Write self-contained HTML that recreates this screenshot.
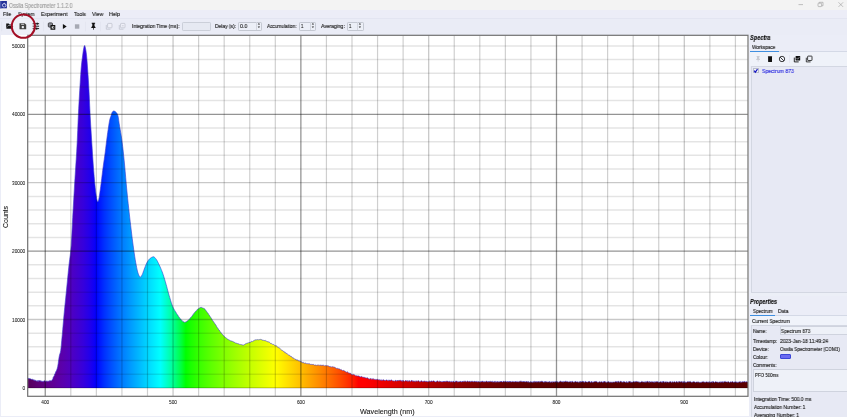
<!DOCTYPE html>
<html lang="en"><head><meta charset="utf-8"><title>Ossila Spectrometer 1.1.2.0</title>
<style>
html,body{margin:0;padding:0;background:#fff;}
body{width:847px;height:417px;overflow:hidden;position:relative;font-family:"Liberation Sans",sans-serif;}
.abs{position:absolute;}
.t{white-space:nowrap;font-family:"Liberation Sans",sans-serif;will-change:transform;-webkit-text-stroke:0.14px currentColor;}
svg{display:block;overflow:visible}
</style></head><body>
<div class="abs" style="left:0px;top:0px;width:847px;height:9.6px;background:#f3f3f3;"></div>
<div class="abs" style="left:0px;top:9.6px;width:847px;height:9.2px;background:#ecedf7;"></div>
<div class="abs" style="left:0px;top:18.8px;width:847px;height:15.8px;background:#eaecf6;"></div>
<div class="abs" style="left:0px;top:17.9px;width:847px;height:0.8px;background:#e3e5f1;"></div>
<div class="abs" style="left:0px;top:34.6px;width:749.3px;height:382.4px;background:#ebedf7;"></div>
<div class="abs" style="left:0.9px;top:34.6px;width:748.4px;height:381.1px;background:#ffffff;"></div>
<div class="abs" style="left:749.3px;top:34.6px;width:97.7px;height:382.4px;background:#ebedf7;"></div>
<svg class="abs" style="left:0;top:1.2px" width="7" height="7.4" viewBox="0 0 7 7.4"><rect x="0" y="0" width="6.9" height="7.3" fill="#222f96"/><rect x="0" y="0" width="1.4" height="7.3" fill="#4b5ab0"/><circle cx="4.2" cy="4.3" r="1.75" fill="none" stroke="#e4e8fb" stroke-width="0.85"/><rect x="3.95" y="1.7" width="0.5" height="1.7" fill="#e4e8fb"/><rect x="3.7" y="5.6" width="1.0" height="0.9" fill="#222f96"/></svg>
<div class="abs t " style="left:9.3px;top:1.64px;font-size:6.3px;line-height:7.56px;color:#9c9c9c;transform:scaleX(0.8132);transform-origin:0 50%;">Ossila Spectrometer 1.1.2.0</div>
<svg class="abs" style="left:790px;top:0" width="57" height="10" viewBox="0 0 57 10"><g stroke="#9a9a9a" stroke-width="0.6" fill="none"><line x1="8.5" y1="4.6" x2="13" y2="4.6"/><rect x="28" y="3.2" width="3.6" height="3.4" rx="0.6"/><path d="M29.2 3.2v-0.9h3.8v3.5h-1.2"/><path d="M48.5 2.3l4.6 4.6M53.1 2.3l-4.6 4.6"/></g></svg>
<div class="abs t " style="left:3.1px;top:11.29px;font-size:5.9px;line-height:7.08px;color:#222;transform:scaleX(0.8520);transform-origin:0 50%;">File</div>
<div class="abs t " style="left:17.6px;top:11.29px;font-size:5.9px;line-height:7.08px;color:#222;transform:scaleX(0.8439);transform-origin:0 50%;">System</div>
<div class="abs t " style="left:40.5px;top:11.29px;font-size:5.9px;line-height:7.08px;color:#222;transform:scaleX(0.8880);transform-origin:0 50%;">Experiment</div>
<div class="abs t " style="left:73.5px;top:11.29px;font-size:5.9px;line-height:7.08px;color:#222;transform:scaleX(0.8640);transform-origin:0 50%;">Tools</div>
<div class="abs t " style="left:91.6px;top:11.29px;font-size:5.9px;line-height:7.08px;color:#222;transform:scaleX(0.8831);transform-origin:0 50%;">View</div>
<div class="abs t " style="left:109px;top:11.29px;font-size:5.9px;line-height:7.08px;color:#222;transform:scaleX(0.9065);transform-origin:0 50%;">Help</div>
<svg class="abs" style="left:0;top:18.8px" width="132" height="15.8" viewBox="0 18.8 132 15.8">
<g fill="#dcdfea"><rect x="1.5" y="21.5" width="0.6" height="9.5"/></g>
<!-- folder -->
<path d="M6.2 23.3h2.5l0.8 0.9h2.9v1.0h-4.4l-1.8 3.2z" fill="#151515"/><path d="M7.7 25.7h5.6l-1.5 2.9h-5.6z" fill="#151515"/>
<!-- save -->
<path d="M19.5 22.95h5.2l1.5 1.5v4.55h-6.7z" fill="#0c0c0c"/><rect x="21.1" y="23.65" width="3.0" height="0.8" fill="#eef0f8"/><rect x="21.75" y="25.9" width="2.1" height="2.1" fill="#eef0f8"/>
<!-- sliders -->
<g stroke="#1b1b1b" stroke-width="1.0" fill="none"><path d="M32.6 23.5h6.5M32.6 26.0h6.5M32.6 28.4h6.5"/></g><g fill="#1b1b1b"><rect x="36.6" y="22.5" width="1.3" height="2.0"/><rect x="34.2" y="25.0" width="1.3" height="2.0"/><rect x="36.0" y="27.4" width="1.3" height="2.0"/></g>
<rect x="43.4" y="21.6" width="0.5" height="9.4" fill="#dee1ec"/>
<!-- copy filled -->
<rect x="48.3" y="22.7" width="4.2" height="4.2" rx="0.9" fill="#8d8f98" stroke="#3a3a3e" stroke-width="0.9"/><rect x="50.5" y="24.9" width="4.8" height="4.6" rx="0.5" fill="#111"/><rect x="51.7" y="26.2" width="2.5" height="2.1" fill="#f4f5fa"/><path d="M52.9 26.5l1.3 0.8l-1.3 0.8z" fill="#111"/>
<!-- play -->
<path d="M62.9 23.9l3.8 2.4l-3.8 2.4z" fill="#111"/>
<!-- stop -->
<rect x="74.9" y="24.1" width="4.4" height="4.4" fill="#a6a9b3"/>
<rect x="85.2" y="21.6" width="0.5" height="9.4" fill="#dee1ec"/>
<!-- pin -->
<path d="M91.7 22.6h3.4v0.9h-0.6v2.4l1.0 1.1v0.7h-4.2v-0.7l1.0-1.1v-2.4h-0.6z" fill="#111"/><rect x="93.05" y="27.6" width="0.7" height="1.9" fill="#111"/>
<rect x="100.3" y="21.6" width="0.5" height="9.4" fill="#dee1ec"/>
<!-- gray copies -->
<g fill="none" stroke="#bcbfca" stroke-width="0.7"><path d="M106.3 24.8v4.2h4.2"/><path d="M119.3 24.8v4.2h4.2"/><rect x="107.6" y="23.2" width="4.4" height="4.4" rx="0.6" fill="#eff0f8"/><rect x="120.6" y="23.2" width="4.4" height="4.4" rx="0.6" fill="#eff0f8"/><path d="M122 25.6h1.8"/></g>
</svg>
<div class="abs t " style="left:132px;top:23.13px;font-size:5.45px;line-height:6.54px;color:#222;transform:scaleX(0.9009);transform-origin:0 50%;">Integration Time (ms):</div>
<div class="abs" style="left:182px;top:21.5px;width:29px;height:9.1px;background:#e6e9f2;border:0.6px solid #cbcfd9;border-radius:1.2px;box-sizing:border-box;"></div>
<div class="abs t " style="left:215px;top:23.13px;font-size:5.45px;line-height:6.54px;color:#222;transform:scaleX(0.9006);transform-origin:0 50%;">Delay (s):</div>
<div class="abs" style="left:238.4px;top:21.5px;width:24px;height:9.1px;background:#eceff7;border:0.6px solid #c4c8d2;border-radius:1.2px;box-sizing:border-box;"></div>
<div class="abs" style="left:256.2px;top:22.1px;width:0.5px;height:7.9px;background:#d3d6df;"></div>
<svg class="abs" style="left:257.2px;top:22.4px" width="4" height="7.4" viewBox="0 0 4 7.4"><path d="M0.7 2.5l1.2-1.5l1.2 1.5zM0.7 4.4l1.2 1.5l1.2-1.5z" fill="#2a2a2a"/></svg>
<div class="abs t " style="left:240.4px;top:23.13px;font-size:5.45px;line-height:6.54px;color:#222;transform:scaleX(0.9635);transform-origin:0 50%;">0.0</div>
<div class="abs t " style="left:267.3px;top:23.13px;font-size:5.45px;line-height:6.54px;color:#222;transform:scaleX(0.8676);transform-origin:0 50%;">Accumulation:</div>
<div class="abs" style="left:299.2px;top:21.5px;width:16.8px;height:9.1px;background:#eceff7;border:0.6px solid #c4c8d2;border-radius:1.2px;box-sizing:border-box;"></div>
<div class="abs" style="left:309.8px;top:22.1px;width:0.5px;height:7.9px;background:#d3d6df;"></div>
<svg class="abs" style="left:310.8px;top:22.4px" width="4" height="7.4" viewBox="0 0 4 7.4"><path d="M0.7 2.5l1.2-1.5l1.2 1.5zM0.7 4.4l1.2 1.5l1.2-1.5z" fill="#2a2a2a"/></svg>
<div class="abs t " style="left:301.2px;top:23.13px;font-size:5.45px;line-height:6.54px;color:#222;transform:scaleX(0.7918);transform-origin:0 50%;">1</div>
<div class="abs t " style="left:321px;top:23.13px;font-size:5.45px;line-height:6.54px;color:#222;transform:scaleX(0.9207);transform-origin:0 50%;">Averaging:</div>
<div class="abs" style="left:347.2px;top:21.5px;width:16.4px;height:9.1px;background:#eceff7;border:0.6px solid #c4c8d2;border-radius:1.2px;box-sizing:border-box;"></div>
<div class="abs" style="left:357.4px;top:22.1px;width:0.5px;height:7.9px;background:#d3d6df;"></div>
<svg class="abs" style="left:358.4px;top:22.4px" width="4" height="7.4" viewBox="0 0 4 7.4"><path d="M0.7 2.5l1.2-1.5l1.2 1.5zM0.7 4.4l1.2 1.5l1.2-1.5z" fill="#2a2a2a"/></svg>
<div class="abs t " style="left:349.2px;top:23.13px;font-size:5.45px;line-height:6.54px;color:#222;transform:scaleX(0.7918);transform-origin:0 50%;">1</div>
<svg class="abs" style="left:0;top:0" width="847" height="417" viewBox="0 0 847 417">
<defs><linearGradient id="spec" gradientUnits="userSpaceOnUse" x1="27.7" y1="0" x2="748.0" y2="0">
<stop offset="0.0000" stop-color="#54005b"/><stop offset="0.0066" stop-color="#590067"/><stop offset="0.0137" stop-color="#5d0073"/><stop offset="0.0208" stop-color="#5f007f"/><stop offset="0.0279" stop-color="#60008b"/><stop offset="0.0350" stop-color="#5f0096"/><stop offset="0.0421" stop-color="#5d00a2"/><stop offset="0.0492" stop-color="#5900ae"/><stop offset="0.0563" stop-color="#5300ba"/><stop offset="0.0599" stop-color="#5000c0"/><stop offset="0.0634" stop-color="#4b00c6"/><stop offset="0.0705" stop-color="#4100d1"/><stop offset="0.0776" stop-color="#3500dd"/><stop offset="0.0847" stop-color="#2500e9"/><stop offset="0.0918" stop-color="#1000f5"/><stop offset="0.0953" stop-color="#0000ff"/><stop offset="0.0989" stop-color="#0013ff"/><stop offset="0.1060" stop-color="#002fff"/><stop offset="0.1131" stop-color="#0046ff"/><stop offset="0.1202" stop-color="#005cff"/><stop offset="0.1273" stop-color="#0071ff"/><stop offset="0.1344" stop-color="#0084ff"/><stop offset="0.1415" stop-color="#0097ff"/><stop offset="0.1486" stop-color="#00a9ff"/><stop offset="0.1557" stop-color="#00bbff"/><stop offset="0.1628" stop-color="#00cdff"/><stop offset="0.1699" stop-color="#00deff"/><stop offset="0.1770" stop-color="#00efff"/><stop offset="0.1841" stop-color="#00ffff"/><stop offset="0.1912" stop-color="#00ffd5"/><stop offset="0.1983" stop-color="#00ffa9"/><stop offset="0.2054" stop-color="#00ff7b"/><stop offset="0.2125" stop-color="#00ff46"/><stop offset="0.2195" stop-color="#00ff00"/><stop offset="0.2266" stop-color="#1aff00"/><stop offset="0.2337" stop-color="#2dff00"/><stop offset="0.2408" stop-color="#3eff00"/><stop offset="0.2479" stop-color="#4eff00"/><stop offset="0.2550" stop-color="#5eff00"/><stop offset="0.2621" stop-color="#6cff00"/><stop offset="0.2692" stop-color="#7bff00"/><stop offset="0.2763" stop-color="#88ff00"/><stop offset="0.2834" stop-color="#96ff00"/><stop offset="0.2905" stop-color="#a3ff00"/><stop offset="0.2976" stop-color="#b0ff00"/><stop offset="0.3047" stop-color="#bdff00"/><stop offset="0.3118" stop-color="#c9ff00"/><stop offset="0.3189" stop-color="#d5ff00"/><stop offset="0.3260" stop-color="#e1ff00"/><stop offset="0.3331" stop-color="#edff00"/><stop offset="0.3402" stop-color="#f9ff00"/><stop offset="0.3438" stop-color="#ffff00"/><stop offset="0.3473" stop-color="#fff900"/><stop offset="0.3544" stop-color="#ffec00"/><stop offset="0.3615" stop-color="#ffdf00"/><stop offset="0.3686" stop-color="#ffd200"/><stop offset="0.3757" stop-color="#ffc500"/><stop offset="0.3828" stop-color="#ffb700"/><stop offset="0.3899" stop-color="#ffa900"/><stop offset="0.3970" stop-color="#ff9b00"/><stop offset="0.4041" stop-color="#ff8d00"/><stop offset="0.4112" stop-color="#ff7e00"/><stop offset="0.4183" stop-color="#ff6f00"/><stop offset="0.4254" stop-color="#ff5f00"/><stop offset="0.4325" stop-color="#ff4f00"/><stop offset="0.4396" stop-color="#ff3e00"/><stop offset="0.4467" stop-color="#ff2b00"/><stop offset="0.4538" stop-color="#ff1600"/><stop offset="0.4591" stop-color="#ff0000"/><stop offset="0.4609" stop-color="#ff0000"/><stop offset="0.4680" stop-color="#ff0000"/><stop offset="0.4946" stop-color="#ec0000"/><stop offset="0.5247" stop-color="#d20000"/><stop offset="0.5567" stop-color="#b40000"/><stop offset="0.5939" stop-color="#940000"/><stop offset="0.6312" stop-color="#7a0000"/><stop offset="0.6631" stop-color="#6a0000"/><stop offset="0.7004" stop-color="#5e0000"/><stop offset="0.7341" stop-color="#5a0000"/><stop offset="1.0000" stop-color="#5a0000"/>
</linearGradient></defs>
<style>
.gD{stroke:#000;stroke-width:1.3;stroke-opacity:.42}
.gMed{stroke:#000;stroke-width:1.3;stroke-opacity:.215}
.gmh{stroke:#000;stroke-width:1.5;stroke-opacity:.105}
.gm{stroke:#000;stroke-width:1.2;stroke-opacity:.19}
.tk{font-family:"Liberation Sans",sans-serif;font-size:5.4px;fill:#222;stroke:#222;stroke-width:0.08}
.ax{font-family:"Liberation Sans",sans-serif;font-size:7.6px;fill:#1a1a1a;stroke:#1a1a1a;stroke-width:0.1}
</style>
<path d="M27.70 378.18 L28.20 378.09 L28.70 378.95 L29.20 378.29 L29.70 379.08 L30.20 378.99 L30.70 378.70 L31.20 379.47 L31.70 378.95 L32.20 379.64 L32.70 379.26 L33.20 379.42 L33.70 380.02 L34.20 380.70 L34.70 379.82 L35.20 380.05 L35.70 380.70 L36.20 381.24 L36.70 380.80 L37.20 380.62 L37.70 381.51 L38.20 380.27 L38.70 381.47 L39.20 380.73 L39.70 380.58 L40.20 380.58 L40.70 380.89 L41.20 381.64 L41.70 380.80 L42.20 381.40 L42.70 381.51 L43.20 381.17 L43.70 381.44 L44.20 380.78 L44.70 380.78 L45.20 380.99 L45.70 381.64 L46.20 381.25 L46.70 381.05 L47.20 381.38 L47.70 381.13 L48.20 380.84 L48.70 381.46 L49.20 381.25 L49.70 380.51 L50.20 380.86 L50.70 380.64 L51.20 380.94 L51.70 380.49 L52.20 379.53 L52.70 379.67 L53.20 377.32 L53.70 376.59 L54.20 376.03 L54.70 374.12 L55.20 373.48 L55.70 371.69 L56.20 371.20 L56.70 369.98 L57.20 368.54 L57.70 366.62 L58.20 363.50 L58.70 359.81 L59.20 356.46 L59.70 354.33 L60.20 353.05 L60.70 350.87 L61.20 346.40 L61.70 340.78 L62.20 335.38 L62.70 329.79 L63.20 323.99 L63.70 318.27 L64.20 312.90 L64.70 307.78 L65.20 302.80 L65.70 297.89 L66.20 292.98 L66.70 287.99 L67.20 282.88 L67.70 277.75 L68.20 272.69 L68.70 267.81 L69.20 263.25 L69.70 259.34 L70.20 255.55 L70.70 251.19 L71.20 245.44 L71.70 237.23 L72.20 227.49 L72.70 217.54 L73.20 208.51 L73.70 199.89 L74.20 191.39 L74.70 182.99 L75.20 174.75 L75.70 167.01 L76.20 159.36 L76.70 151.23 L77.20 142.01 L77.70 130.55 L78.20 118.47 L78.70 108.14 L79.20 99.16 L79.70 90.84 L80.20 82.74 L80.70 74.63 L81.20 67.80 L81.70 62.87 L82.20 58.82 L82.70 55.12 L83.20 51.34 L83.70 48.30 L84.20 46.18 L84.70 45.46 L85.20 46.98 L85.70 49.25 L86.20 52.38 L86.70 56.70 L87.20 63.09 L87.70 69.99 L88.20 77.17 L88.70 85.14 L89.20 94.75 L89.70 105.69 L90.20 116.13 L90.70 124.99 L91.20 133.10 L91.70 140.89 L92.20 148.72 L92.70 156.57 L93.20 163.97 L93.70 170.54 L94.20 176.67 L94.70 182.34 L95.20 187.37 L95.70 191.63 L96.20 195.50 L96.70 198.66 L97.20 200.74 L97.70 201.99 L98.20 201.28 L98.70 199.65 L99.20 197.17 L99.70 193.84 L100.20 190.17 L100.70 186.56 L101.20 182.69 L101.70 178.57 L102.20 174.39 L102.70 170.32 L103.20 166.52 L103.70 162.98 L104.20 159.54 L104.70 156.06 L105.20 152.38 L105.70 148.32 L106.20 144.15 L106.70 140.18 L107.20 136.29 L107.70 132.62 L108.20 129.21 L108.70 125.82 L109.20 122.65 L109.70 119.99 L110.20 118.10 L110.70 116.80 L111.20 115.35 L111.70 113.49 L112.20 112.20 L112.70 111.61 L113.20 111.19 L113.70 111.00 L114.20 111.07 L114.70 111.30 L115.20 111.62 L115.70 111.97 L116.20 112.42 L116.70 113.03 L117.20 113.84 L117.70 114.88 L118.20 116.86 L118.70 120.14 L119.20 123.72 L119.70 126.76 L120.20 129.61 L120.70 132.47 L121.20 135.51 L121.70 138.91 L122.20 142.68 L122.70 146.76 L123.20 151.11 L123.70 155.76 L124.20 160.81 L124.70 166.06 L125.20 171.63 L125.70 177.44 L126.20 183.26 L126.70 188.85 L127.20 194.01 L127.70 198.92 L128.20 203.66 L128.70 208.26 L129.20 212.74 L129.70 217.13 L130.20 221.44 L130.70 225.70 L131.20 229.93 L131.70 234.09 L132.20 238.15 L132.70 242.07 L133.20 245.84 L133.70 249.41 L134.20 252.89 L134.70 256.25 L135.20 259.42 L135.70 262.37 L136.20 265.05 L136.70 267.66 L137.20 270.06 L137.70 272.07 L138.20 273.54 L138.70 274.88 L139.20 276.05 L139.70 276.88 L140.20 277.20 L140.70 276.95 L141.20 276.32 L141.70 275.50 L142.20 274.64 L142.70 273.49 L143.20 272.10 L143.70 270.64 L144.20 269.26 L144.70 267.97 L145.20 266.66 L145.70 265.36 L146.20 264.14 L146.70 263.06 L147.20 262.16 L147.70 261.33 L148.20 260.56 L148.70 259.86 L149.20 259.25 L149.70 258.74 L150.20 258.35 L150.70 257.99 L151.20 257.64 L151.70 257.33 L152.20 257.07 L152.70 256.88 L153.20 256.77 L153.70 256.77 L154.20 257.01 L154.70 257.45 L155.20 258.01 L155.70 258.63 L156.20 259.25 L156.70 259.99 L157.20 260.86 L157.70 261.82 L158.20 262.84 L158.70 263.88 L159.20 264.91 L159.70 265.97 L160.20 267.07 L160.70 268.21 L161.20 269.40 L161.70 270.63 L162.20 271.93 L162.70 273.28 L163.20 274.72 L163.70 276.26 L164.20 277.87 L164.70 279.54 L165.20 281.24 L165.70 282.97 L166.20 284.70 L166.70 286.51 L167.20 288.39 L167.70 290.29 L168.20 292.16 L168.70 293.97 L169.20 295.68 L169.70 297.38 L170.20 299.09 L170.70 300.76 L171.20 302.37 L171.70 303.89 L172.20 305.29 L172.70 306.52 L173.20 307.61 L173.70 308.61 L174.20 309.54 L174.70 310.41 L175.20 311.23 L175.70 312.02 L176.20 312.86 L176.70 313.67 L177.20 314.48 L177.70 314.93 L178.20 315.94 L178.70 316.67 L179.20 317.17 L179.70 318.17 L180.20 318.84 L180.70 319.08 L181.20 319.89 L181.70 320.15 L182.20 320.69 L182.70 321.38 L183.20 321.73 L183.70 321.78 L184.20 322.13 L184.70 322.26 L185.20 322.13 L185.70 321.90 L186.20 321.69 L186.70 321.55 L187.20 320.88 L187.70 320.74 L188.20 320.32 L188.70 319.70 L189.20 319.33 L189.70 318.89 L190.20 318.24 L190.70 317.42 L191.20 317.20 L191.70 316.49 L192.20 315.97 L192.70 314.96 L193.20 314.38 L193.70 313.62 L194.20 313.29 L194.70 312.42 L195.20 311.74 L195.70 311.29 L196.20 310.97 L196.70 310.41 L197.20 309.65 L197.70 309.12 L198.20 309.03 L198.70 308.51 L199.20 308.28 L199.70 307.73 L200.20 307.48 L200.70 307.61 L201.20 307.47 L201.70 307.38 L202.20 307.90 L202.70 307.94 L203.20 308.23 L203.70 308.16 L204.20 308.78 L204.70 308.84 L205.20 309.74 L205.70 310.20 L206.20 310.84 L206.70 311.62 L207.20 312.45 L207.70 312.85 L208.20 313.52 L208.70 314.45 L209.20 315.10 L209.70 315.82 L210.20 316.63 L210.70 317.35 L211.20 318.17 L211.70 318.97 L212.20 319.71 L212.70 320.66 L213.20 321.21 L213.70 322.05 L214.20 322.66 L214.70 323.48 L215.20 324.09 L215.70 324.96 L216.20 325.62 L216.70 326.72 L217.20 327.40 L217.70 328.00 L218.20 328.87 L218.70 329.78 L219.20 330.10 L219.70 331.08 L220.20 331.56 L220.70 332.24 L221.20 333.02 L221.70 333.43 L222.20 334.07 L222.70 334.72 L223.20 335.40 L223.70 335.64 L224.20 336.37 L224.70 336.82 L225.20 337.28 L225.70 337.66 L226.20 338.08 L226.70 338.38 L227.20 338.80 L227.70 339.12 L228.20 339.72 L228.70 339.78 L229.20 339.98 L229.70 340.17 L230.20 340.71 L230.70 340.93 L231.20 341.04 L231.70 341.08 L232.20 341.27 L232.70 341.51 L233.20 341.81 L233.70 341.89 L234.20 342.23 L234.70 342.36 L235.20 342.88 L235.70 343.09 L236.20 343.10 L236.70 343.17 L237.20 343.69 L237.70 343.61 L238.20 343.82 L238.70 343.85 L239.20 344.20 L239.70 344.40 L240.20 344.56 L240.70 344.47 L241.20 344.87 L241.70 344.61 L242.20 344.95 L242.70 344.91 L243.20 345.21 L243.70 344.91 L244.20 344.64 L244.70 344.43 L245.20 343.88 L245.70 343.74 L246.20 343.44 L246.70 343.43 L247.20 343.20 L247.70 343.11 L248.20 343.11 L248.70 342.60 L249.20 342.41 L249.70 342.79 L250.20 341.95 L250.70 342.20 L251.20 341.91 L251.70 341.19 L252.20 341.58 L252.70 341.38 L253.20 340.94 L253.70 340.81 L254.20 340.67 L254.70 339.92 L255.20 340.00 L255.70 339.78 L256.20 339.88 L256.70 339.76 L257.20 339.76 L257.70 339.58 L258.20 339.85 L258.70 339.72 L259.20 339.77 L259.70 339.44 L260.20 339.34 L260.70 339.47 L261.20 339.71 L261.70 339.58 L262.20 340.25 L262.70 340.12 L263.20 340.29 L263.70 340.40 L264.20 340.57 L264.70 340.54 L265.20 340.30 L265.70 341.09 L266.20 341.22 L266.70 341.21 L267.20 341.44 L267.70 341.75 L268.20 341.50 L268.70 342.30 L269.20 342.22 L269.70 342.39 L270.20 342.86 L270.70 343.53 L271.20 343.36 L271.70 344.01 L272.20 344.41 L272.70 344.22 L273.20 344.32 L273.70 344.61 L274.20 345.00 L274.70 345.32 L275.20 345.48 L275.70 345.81 L276.20 345.68 L276.70 346.08 L277.20 346.51 L277.70 347.26 L278.20 347.27 L278.70 347.84 L279.20 347.75 L279.70 348.16 L280.20 348.70 L280.70 349.40 L281.20 349.80 L281.70 350.17 L282.20 350.24 L282.70 350.80 L283.20 351.11 L283.70 351.47 L284.20 351.54 L284.70 352.50 L285.20 352.29 L285.70 353.25 L286.20 353.55 L286.70 353.16 L287.20 353.85 L287.70 354.49 L288.20 354.96 L288.70 354.89 L289.20 355.10 L289.70 355.39 L290.20 356.32 L290.70 356.07 L291.20 356.70 L291.70 356.67 L292.20 357.30 L292.70 357.97 L293.20 357.63 L293.70 358.49 L294.20 358.55 L294.70 359.14 L295.20 359.27 L295.70 359.17 L296.20 359.98 L296.70 359.91 L297.20 359.80 L297.70 360.04 L298.20 360.67 L298.70 360.87 L299.20 360.97 L299.70 361.04 L300.20 361.40 L300.70 361.57 L301.20 362.17 L301.70 361.68 L302.20 362.44 L302.70 362.68 L303.20 362.26 L303.70 363.05 L304.20 363.03 L304.70 363.32 L305.20 362.97 L305.70 363.16 L306.20 363.31 L306.70 363.91 L307.20 363.70 L307.70 363.63 L308.20 363.78 L308.70 363.76 L309.20 363.68 L309.70 363.82 L310.20 364.49 L310.70 364.14 L311.20 364.74 L311.70 364.26 L312.20 364.34 L312.70 364.60 L313.20 364.40 L313.70 364.60 L314.20 365.12 L314.70 365.12 L315.20 365.11 L315.70 365.01 L316.20 365.28 L316.70 365.35 L317.20 365.08 L317.70 365.25 L318.20 364.75 L318.70 365.34 L319.20 365.14 L319.70 365.41 L320.20 365.35 L320.70 365.09 L321.20 364.92 L321.70 365.65 L322.20 365.04 L322.70 365.34 L323.20 365.27 L323.70 365.27 L324.20 365.66 L324.70 365.90 L325.20 365.39 L325.70 365.77 L326.20 365.57 L326.70 365.87 L327.20 365.83 L327.70 365.75 L328.20 365.85 L328.70 365.99 L329.20 366.66 L329.70 366.44 L330.20 366.32 L330.70 366.97 L331.20 367.14 L331.70 366.81 L332.20 366.66 L332.70 366.82 L333.20 366.85 L333.70 367.17 L334.20 367.09 L334.70 367.35 L335.20 367.50 L335.70 367.91 L336.20 368.32 L336.70 368.38 L337.20 368.29 L337.70 368.47 L338.20 368.73 L338.70 368.80 L339.20 368.94 L339.70 368.90 L340.20 369.26 L340.70 370.00 L341.20 369.52 L341.70 370.01 L342.20 370.30 L342.70 370.68 L343.20 370.35 L343.70 370.58 L344.20 370.74 L344.70 371.05 L345.20 371.27 L345.70 371.86 L346.20 371.96 L346.70 372.18 L347.20 371.70 L347.70 371.92 L348.20 372.69 L348.70 373.07 L349.20 372.96 L349.70 373.29 L350.20 373.05 L350.70 373.59 L351.20 374.23 L351.70 374.35 L352.20 374.56 L352.70 374.83 L353.20 374.42 L353.70 374.47 L354.20 374.66 L354.70 375.11 L355.20 375.38 L355.70 375.74 L356.20 375.70 L356.70 375.78 L357.20 376.02 L357.70 375.91 L358.20 376.11 L358.70 375.83 L359.20 376.55 L359.70 376.23 L360.20 377.07 L360.70 376.86 L361.20 376.57 L361.70 376.48 L362.20 376.75 L362.70 377.34 L363.20 377.54 L363.70 376.96 L364.20 377.04 L364.70 377.71 L365.20 377.90 L365.70 377.79 L366.20 377.70 L366.70 378.26 L367.20 377.65 L367.70 378.09 L368.20 378.37 L368.70 379.06 L369.20 378.76 L369.70 379.13 L370.20 378.71 L370.70 378.50 L371.20 378.59 L371.70 379.51 L372.20 379.27 L372.70 378.86 L373.20 378.59 L373.70 379.22 L374.20 379.50 L374.70 379.26 L375.20 379.13 L375.70 379.68 L376.20 380.05 L376.70 379.27 L377.20 379.09 L377.70 379.51 L378.20 379.65 L378.70 380.01 L379.20 379.48 L379.70 380.23 L380.20 380.20 L380.70 379.95 L381.20 379.63 L381.70 380.58 L382.20 379.82 L382.70 380.46 L383.20 379.78 L383.70 379.80 L384.20 380.47 L384.70 379.94 L385.20 380.75 L385.70 380.23 L386.20 379.89 L386.70 379.95 L387.20 380.21 L387.70 380.53 L388.20 380.89 L388.70 379.95 L389.20 380.27 L389.70 380.07 L390.20 381.00 L390.70 380.02 L391.20 379.93 L391.70 379.96 L392.20 380.38 L392.70 381.00 L393.20 381.00 L393.70 380.84 L394.20 381.17 L394.70 381.11 L395.20 380.41 L395.70 380.25 L396.20 381.17 L396.70 380.96 L397.20 380.11 L397.70 380.89 L398.20 380.56 L398.70 380.57 L399.20 380.53 L399.70 380.35 L400.20 380.17 L400.70 380.51 L401.20 380.61 L401.70 381.35 L402.20 380.37 L402.70 381.39 L403.20 380.49 L403.70 380.69 L404.20 381.26 L404.70 381.27 L405.20 380.81 L405.70 380.37 L406.20 380.89 L406.70 380.78 L407.20 381.44 L407.70 380.58 L408.20 380.80 L408.70 381.45 L409.20 380.42 L409.70 380.89 L410.20 381.38 L410.70 381.33 L411.20 380.47 L411.70 380.48 L412.20 380.52 L412.70 381.56 L413.20 380.77 L413.70 381.37 L414.20 381.56 L414.70 380.90 L415.20 380.83 L415.70 381.66 L416.20 381.26 L416.70 380.85 L417.20 381.40 L417.70 380.93 L418.20 380.89 L418.70 380.57 L419.20 381.48 L419.70 381.69 L420.20 381.36 L420.70 381.74 L421.20 380.64 L421.70 380.90 L422.20 381.20 L422.70 381.79 L423.20 381.79 L423.70 381.12 L424.20 380.97 L424.70 381.19 L425.20 381.27 L425.70 381.80 L426.20 380.92 L426.70 381.67 L427.20 381.60 L427.70 381.71 L428.20 381.66 L428.70 381.47 L429.20 381.14 L429.70 381.13 L430.20 381.19 L430.70 381.70 L431.20 380.87 L431.70 381.02 L432.20 381.69 L432.70 381.09 L433.20 380.88 L433.70 380.85 L434.20 381.47 L434.70 381.21 L435.20 382.00 L435.70 381.89 L436.20 382.02 L436.70 381.16 L437.20 380.95 L437.70 380.97 L438.20 381.45 L438.70 381.71 L439.20 381.40 L439.70 381.15 L440.20 381.37 L440.70 381.62 L441.20 381.69 L441.70 381.78 L442.20 381.91 L442.70 381.69 L443.20 381.04 L443.70 381.91 L444.20 381.26 L444.70 381.59 L445.20 381.36 L445.70 381.80 L446.20 381.15 L446.70 381.21 L447.20 381.21 L447.70 381.11 L448.20 381.99 L448.70 381.62 L449.20 381.32 L449.70 381.41 L450.20 382.13 L450.70 381.55 L451.20 381.22 L451.70 381.91 L452.20 381.73 L452.70 382.14 L453.20 381.07 L453.70 381.52 L454.20 381.94 L454.70 381.97 L455.20 382.06 L455.70 381.01 L456.20 381.32 L456.70 381.11 L457.20 381.20 L457.70 382.14 L458.20 381.67 L458.70 382.09 L459.20 381.42 L459.70 382.02 L460.20 381.52 L460.70 381.30 L461.20 381.92 L461.70 382.12 L462.20 381.12 L462.70 381.71 L463.20 381.74 L463.70 381.26 L464.20 381.44 L464.70 381.17 L465.20 381.25 L465.70 381.31 L466.20 381.72 L466.70 381.79 L467.20 381.25 L467.70 381.02 L468.20 381.40 L468.70 381.83 L469.20 381.24 L469.70 381.39 L470.20 381.26 L470.70 381.97 L471.20 381.68 L471.70 381.10 L472.20 381.15 L472.70 381.50 L473.20 381.69 L473.70 381.80 L474.20 381.14 L474.70 381.23 L475.20 381.87 L475.70 381.53 L476.20 381.38 L476.70 381.41 L477.20 382.18 L477.70 381.42 L478.20 381.72 L478.70 381.47 L479.20 381.55 L479.70 382.08 L480.20 382.24 L480.70 381.49 L481.20 381.29 L481.70 381.93 L482.20 381.30 L482.70 381.06 L483.20 382.14 L483.70 381.57 L484.20 382.04 L484.70 381.55 L485.20 382.12 L485.70 381.62 L486.20 381.26 L486.70 381.08 L487.20 381.73 L487.70 381.84 L488.20 382.16 L488.70 381.18 L489.20 381.82 L489.70 381.52 L490.20 381.68 L490.70 381.25 L491.20 381.42 L491.70 381.70 L492.20 382.19 L492.70 381.21 L493.20 381.67 L493.70 382.05 L494.20 382.25 L494.70 381.32 L495.20 381.24 L495.70 382.22 L496.20 382.26 L496.70 381.67 L497.20 381.16 L497.70 382.21 L498.20 381.56 L498.70 382.18 L499.20 381.84 L499.70 382.09 L500.20 381.29 L500.70 382.04 L501.20 381.37 L501.70 381.59 L502.20 382.12 L502.70 382.10 L503.20 381.33 L503.70 381.37 L504.20 381.59 L504.70 381.73 L505.20 381.57 L505.70 381.26 L506.20 381.41 L506.70 381.99 L507.20 382.20 L507.70 381.17 L508.20 381.80 L508.70 382.03 L509.20 381.17 L509.70 382.13 L510.20 381.27 L510.70 381.85 L511.20 381.79 L511.70 381.88 L512.20 381.50 L512.70 381.64 L513.20 381.83 L513.70 381.65 L514.20 381.93 L514.70 381.67 L515.20 381.67 L515.70 381.17 L516.20 381.88 L516.70 381.73 L517.20 381.43 L517.70 382.06 L518.20 382.08 L518.70 381.70 L519.20 381.36 L519.70 381.72 L520.20 381.28 L520.70 381.31 L521.20 381.67 L521.70 381.27 L522.20 381.69 L522.70 381.77 L523.20 381.21 L523.70 381.92 L524.20 381.26 L524.70 382.04 L525.20 382.10 L525.70 381.78 L526.20 381.23 L526.70 381.77 L527.20 381.62 L527.70 382.31 L528.20 381.33 L528.70 382.20 L529.20 382.37 L529.70 382.05 L530.20 382.15 L530.70 381.41 L531.20 382.36 L531.70 381.77 L532.20 382.33 L532.70 382.28 L533.20 381.38 L533.70 382.13 L534.20 382.30 L534.70 381.26 L535.20 381.61 L535.70 382.10 L536.20 381.38 L536.70 382.27 L537.20 381.52 L537.70 382.17 L538.20 381.37 L538.70 381.80 L539.20 382.30 L539.70 381.45 L540.20 381.51 L540.70 381.81 L541.20 381.58 L541.70 381.25 L542.20 381.42 L542.70 381.40 L543.20 382.33 L543.70 382.02 L544.20 382.28 L544.70 381.41 L545.20 382.15 L545.70 381.35 L546.20 381.85 L546.70 381.98 L547.20 381.65 L547.70 382.26 L548.20 381.88 L548.70 381.91 L549.20 382.28 L549.70 381.34 L550.20 382.41 L550.70 381.98 L551.20 381.70 L551.70 382.18 L552.20 381.54 L552.70 382.41 L553.20 381.92 L553.70 381.66 L554.20 382.15 L554.70 381.76 L555.20 381.44 L555.70 382.12 L556.20 381.29 L556.70 382.22 L557.20 381.54 L557.70 382.00 L558.20 382.42 L558.70 381.94 L559.20 382.03 L559.70 381.61 L560.20 381.24 L560.70 381.28 L561.20 381.42 L561.70 381.98 L562.20 381.76 L562.70 381.86 L563.20 382.32 L563.70 381.41 L564.20 381.52 L564.70 382.03 L565.20 381.28 L565.70 381.25 L566.20 381.68 L566.70 381.38 L567.20 381.68 L567.70 381.52 L568.20 381.96 L568.70 381.96 L569.20 381.50 L569.70 382.01 L570.20 381.83 L570.70 381.42 L571.20 382.38 L571.70 381.55 L572.20 381.44 L572.70 381.38 L573.20 382.03 L573.70 382.31 L574.20 382.20 L574.70 381.75 L575.20 381.58 L575.70 381.28 L576.20 382.04 L576.70 381.94 L577.20 381.69 L577.70 382.05 L578.20 381.80 L578.70 382.40 L579.20 382.15 L579.70 381.57 L580.20 382.36 L580.70 381.33 L581.20 381.91 L581.70 381.76 L582.20 381.56 L582.70 381.35 L583.20 382.21 L583.70 381.29 L584.20 381.94 L584.70 382.41 L585.20 381.45 L585.70 381.52 L586.20 382.01 L586.70 381.89 L587.20 382.05 L587.70 382.26 L588.20 381.50 L588.70 381.66 L589.20 381.65 L589.70 381.35 L590.20 382.36 L590.70 382.23 L591.20 382.15 L591.70 381.30 L592.20 382.30 L592.70 382.19 L593.20 381.85 L593.70 382.18 L594.20 381.84 L594.70 381.57 L595.20 381.42 L595.70 381.57 L596.20 381.34 L596.70 381.70 L597.20 382.20 L597.70 382.13 L598.20 382.31 L598.70 382.15 L599.20 381.62 L599.70 381.96 L600.20 381.82 L600.70 382.25 L601.20 381.93 L601.70 381.62 L602.20 382.07 L602.70 382.46 L603.20 381.56 L603.70 382.36 L604.20 381.32 L604.70 381.62 L605.20 381.59 L605.70 382.20 L606.20 382.44 L606.70 382.20 L607.20 381.70 L607.70 382.36 L608.20 381.70 L608.70 381.60 L609.20 382.40 L609.70 382.07 L610.20 382.14 L610.70 382.11 L611.20 382.49 L611.70 381.88 L612.20 382.32 L612.70 382.15 L613.20 382.34 L613.70 381.84 L614.20 382.18 L614.70 382.00 L615.20 381.69 L615.70 381.57 L616.20 382.06 L616.70 381.41 L617.20 382.41 L617.70 381.49 L618.20 381.35 L618.70 381.45 L619.20 382.43 L619.70 381.73 L620.20 381.49 L620.70 381.36 L621.20 381.37 L621.70 382.15 L622.20 382.08 L622.70 382.16 L623.20 382.21 L623.70 381.40 L624.20 382.03 L624.70 381.76 L625.20 382.31 L625.70 382.31 L626.20 382.40 L626.70 381.41 L627.20 382.37 L627.70 382.43 L628.20 382.46 L628.70 381.46 L629.20 381.58 L629.70 381.46 L630.20 381.37 L630.70 382.35 L631.20 382.31 L631.70 382.09 L632.20 382.32 L632.70 382.09 L633.20 381.68 L633.70 381.45 L634.20 381.45 L634.70 382.24 L635.20 381.58 L635.70 381.72 L636.20 381.85 L636.70 381.36 L637.20 381.65 L637.70 381.68 L638.20 382.20 L638.70 381.78 L639.20 381.72 L639.70 382.50 L640.20 381.94 L640.70 382.36 L641.20 382.08 L641.70 381.38 L642.20 381.84 L642.70 381.87 L643.20 382.27 L643.70 381.76 L644.20 382.19 L644.70 381.99 L645.20 381.60 L645.70 382.38 L646.20 381.46 L646.70 382.33 L647.20 381.55 L647.70 381.35 L648.20 381.59 L648.70 382.26 L649.20 382.52 L649.70 381.35 L650.20 381.94 L650.70 381.94 L651.20 382.31 L651.70 381.57 L652.20 381.94 L652.70 381.77 L653.20 382.35 L653.70 381.67 L654.20 382.49 L654.70 381.69 L655.20 381.61 L655.70 382.19 L656.20 381.95 L656.70 381.49 L657.20 382.12 L657.70 381.45 L658.20 382.30 L658.70 382.19 L659.20 382.30 L659.70 382.11 L660.20 381.79 L660.70 381.84 L661.20 381.83 L661.70 382.43 L662.20 381.46 L662.70 382.43 L663.20 381.39 L663.70 381.61 L664.20 381.68 L664.70 382.44 L665.20 381.96 L665.70 381.82 L666.20 382.42 L666.70 381.64 L667.20 381.92 L667.70 382.00 L668.20 382.27 L668.70 382.27 L669.20 382.14 L669.70 381.78 L670.20 381.76 L670.70 381.55 L671.20 382.38 L671.70 382.16 L672.20 382.26 L672.70 381.57 L673.20 381.90 L673.70 382.30 L674.20 382.06 L674.70 381.52 L675.20 381.92 L675.70 382.43 L676.20 381.66 L676.70 381.60 L677.20 381.73 L677.70 382.22 L678.20 382.38 L678.70 381.56 L679.20 381.56 L679.70 381.67 L680.20 381.77 L680.70 382.00 L681.20 381.57 L681.70 381.77 L682.20 381.60 L682.70 382.55 L683.20 382.25 L683.70 381.50 L684.20 382.53 L684.70 381.50 L685.20 381.84 L685.70 382.56 L686.20 382.33 L686.70 382.26 L687.20 381.90 L687.70 381.61 L688.20 382.14 L688.70 381.51 L689.20 381.63 L689.70 381.85 L690.20 381.42 L690.70 381.86 L691.20 382.33 L691.70 382.21 L692.20 381.98 L692.70 382.14 L693.20 381.94 L693.70 381.55 L694.20 382.11 L694.70 381.87 L695.20 382.27 L695.70 382.47 L696.20 381.90 L696.70 382.07 L697.20 382.28 L697.70 381.89 L698.20 381.66 L698.70 382.25 L699.20 382.44 L699.70 382.31 L700.20 382.23 L700.70 382.41 L701.20 382.20 L701.70 382.16 L702.20 381.93 L702.70 381.76 L703.20 382.14 L703.70 381.51 L704.20 381.89 L704.70 382.33 L705.20 382.24 L705.70 382.14 L706.20 381.69 L706.70 381.90 L707.20 381.94 L707.70 382.14 L708.20 381.88 L708.70 382.20 L709.20 382.51 L709.70 381.61 L710.20 382.18 L710.70 382.33 L711.20 381.86 L711.70 381.98 L712.20 382.56 L712.70 381.44 L713.20 382.04 L713.70 381.59 L714.20 382.33 L714.70 382.52 L715.20 382.02 L715.70 381.51 L716.20 382.08 L716.70 382.04 L717.20 382.25 L717.70 382.01 L718.20 382.16 L718.70 382.39 L719.20 382.02 L719.70 381.89 L720.20 382.53 L720.70 381.65 L721.20 382.22 L721.70 381.87 L722.20 382.31 L722.70 381.54 L723.20 382.58 L723.70 381.82 L724.20 381.46 L724.70 381.73 L725.20 381.88 L725.70 381.41 L726.20 381.90 L726.70 381.90 L727.20 382.24 L727.70 381.82 L728.20 381.72 L728.70 381.67 L729.20 382.29 L729.70 382.53 L730.20 382.03 L730.70 381.66 L731.20 382.36 L731.70 381.87 L732.20 381.65 L732.70 381.55 L733.20 382.33 L733.70 382.37 L734.20 382.16 L734.70 381.96 L735.20 382.07 L735.70 381.67 L736.20 382.56 L736.70 381.82 L737.20 382.17 L737.70 382.38 L738.20 382.38 L738.70 381.96 L739.20 381.75 L739.70 382.06 L740.20 381.55 L740.70 382.40 L741.20 381.83 L741.70 382.42 L742.20 381.72 L742.70 381.85 L743.20 381.70 L743.70 381.91 L744.20 381.62 L744.70 381.40 L745.20 382.27 L745.70 381.74 L746.20 381.69 L746.70 381.76 L747.20 381.98 L748.00 381.91 L748.00 387.90 L27.70 387.90 Z" fill="url(#spec)"/>
<path d="M27.70 378.18 L28.20 378.09 L28.70 378.95 L29.20 378.29 L29.70 379.08 L30.20 378.99 L30.70 378.70 L31.20 379.47 L31.70 378.95 L32.20 379.64 L32.70 379.26 L33.20 379.42 L33.70 380.02 L34.20 380.70 L34.70 379.82 L35.20 380.05 L35.70 380.70 L36.20 381.24 L36.70 380.80 L37.20 380.62 L37.70 381.51 L38.20 380.27 L38.70 381.47 L39.20 380.73 L39.70 380.58 L40.20 380.58 L40.70 380.89 L41.20 381.64 L41.70 380.80 L42.20 381.40 L42.70 381.51 L43.20 381.17 L43.70 381.44 L44.20 380.78 L44.70 380.78 L45.20 380.99 L45.70 381.64 L46.20 381.25 L46.70 381.05 L47.20 381.38 L47.70 381.13 L48.20 380.84 L48.70 381.46 L49.20 381.25 L49.70 380.51 L50.20 380.86 L50.70 380.64 L51.20 380.94 L51.70 380.49 L52.20 379.53 L52.70 379.67 L53.20 377.32 L53.70 376.59 L54.20 376.03 L54.70 374.12 L55.20 373.48 L55.70 371.69 L56.20 371.20 L56.70 369.98 L57.20 368.54 L57.70 366.62 L58.20 363.50 L58.70 359.81 L59.20 356.46 L59.70 354.33 L60.20 353.05 L60.70 350.87 L61.20 346.40 L61.70 340.78 L62.20 335.38 L62.70 329.79 L63.20 323.99 L63.70 318.27 L64.20 312.90 L64.70 307.78 L65.20 302.80 L65.70 297.89 L66.20 292.98 L66.70 287.99 L67.20 282.88 L67.70 277.75 L68.20 272.69 L68.70 267.81 L69.20 263.25 L69.70 259.34 L70.20 255.55 L70.70 251.19 L71.20 245.44 L71.70 237.23 L72.20 227.49 L72.70 217.54 L73.20 208.51 L73.70 199.89 L74.20 191.39 L74.70 182.99 L75.20 174.75 L75.70 167.01 L76.20 159.36 L76.70 151.23 L77.20 142.01 L77.70 130.55 L78.20 118.47 L78.70 108.14 L79.20 99.16 L79.70 90.84 L80.20 82.74 L80.70 74.63 L81.20 67.80 L81.70 62.87 L82.20 58.82 L82.70 55.12 L83.20 51.34 L83.70 48.30 L84.20 46.18 L84.70 45.46 L85.20 46.98 L85.70 49.25 L86.20 52.38 L86.70 56.70 L87.20 63.09 L87.70 69.99 L88.20 77.17 L88.70 85.14 L89.20 94.75 L89.70 105.69 L90.20 116.13 L90.70 124.99 L91.20 133.10 L91.70 140.89 L92.20 148.72 L92.70 156.57 L93.20 163.97 L93.70 170.54 L94.20 176.67 L94.70 182.34 L95.20 187.37 L95.70 191.63 L96.20 195.50 L96.70 198.66 L97.20 200.74 L97.70 201.99 L98.20 201.28 L98.70 199.65 L99.20 197.17 L99.70 193.84 L100.20 190.17 L100.70 186.56 L101.20 182.69 L101.70 178.57 L102.20 174.39 L102.70 170.32 L103.20 166.52 L103.70 162.98 L104.20 159.54 L104.70 156.06 L105.20 152.38 L105.70 148.32 L106.20 144.15 L106.70 140.18 L107.20 136.29 L107.70 132.62 L108.20 129.21 L108.70 125.82 L109.20 122.65 L109.70 119.99 L110.20 118.10 L110.70 116.80 L111.20 115.35 L111.70 113.49 L112.20 112.20 L112.70 111.61 L113.20 111.19 L113.70 111.00 L114.20 111.07 L114.70 111.30 L115.20 111.62 L115.70 111.97 L116.20 112.42 L116.70 113.03 L117.20 113.84 L117.70 114.88 L118.20 116.86 L118.70 120.14 L119.20 123.72 L119.70 126.76 L120.20 129.61 L120.70 132.47 L121.20 135.51 L121.70 138.91 L122.20 142.68 L122.70 146.76 L123.20 151.11 L123.70 155.76 L124.20 160.81 L124.70 166.06 L125.20 171.63 L125.70 177.44 L126.20 183.26 L126.70 188.85 L127.20 194.01 L127.70 198.92 L128.20 203.66 L128.70 208.26 L129.20 212.74 L129.70 217.13 L130.20 221.44 L130.70 225.70 L131.20 229.93 L131.70 234.09 L132.20 238.15 L132.70 242.07 L133.20 245.84 L133.70 249.41 L134.20 252.89 L134.70 256.25 L135.20 259.42 L135.70 262.37 L136.20 265.05 L136.70 267.66 L137.20 270.06 L137.70 272.07 L138.20 273.54 L138.70 274.88 L139.20 276.05 L139.70 276.88 L140.20 277.20 L140.70 276.95 L141.20 276.32 L141.70 275.50 L142.20 274.64 L142.70 273.49 L143.20 272.10 L143.70 270.64 L144.20 269.26 L144.70 267.97 L145.20 266.66 L145.70 265.36 L146.20 264.14 L146.70 263.06 L147.20 262.16 L147.70 261.33 L148.20 260.56 L148.70 259.86 L149.20 259.25 L149.70 258.74 L150.20 258.35 L150.70 257.99 L151.20 257.64 L151.70 257.33 L152.20 257.07 L152.70 256.88 L153.20 256.77 L153.70 256.77 L154.20 257.01 L154.70 257.45 L155.20 258.01 L155.70 258.63 L156.20 259.25 L156.70 259.99 L157.20 260.86 L157.70 261.82 L158.20 262.84 L158.70 263.88 L159.20 264.91 L159.70 265.97 L160.20 267.07 L160.70 268.21 L161.20 269.40 L161.70 270.63 L162.20 271.93 L162.70 273.28 L163.20 274.72 L163.70 276.26 L164.20 277.87 L164.70 279.54 L165.20 281.24 L165.70 282.97 L166.20 284.70 L166.70 286.51 L167.20 288.39 L167.70 290.29 L168.20 292.16 L168.70 293.97 L169.20 295.68 L169.70 297.38 L170.20 299.09 L170.70 300.76 L171.20 302.37 L171.70 303.89 L172.20 305.29 L172.70 306.52 L173.20 307.61 L173.70 308.61 L174.20 309.54 L174.70 310.41 L175.20 311.23 L175.70 312.02 L176.20 312.86 L176.70 313.67 L177.20 314.48 L177.70 314.93 L178.20 315.94 L178.70 316.67 L179.20 317.17 L179.70 318.17 L180.20 318.84 L180.70 319.08 L181.20 319.89 L181.70 320.15 L182.20 320.69 L182.70 321.38 L183.20 321.73 L183.70 321.78 L184.20 322.13 L184.70 322.26 L185.20 322.13 L185.70 321.90 L186.20 321.69 L186.70 321.55 L187.20 320.88 L187.70 320.74 L188.20 320.32 L188.70 319.70 L189.20 319.33 L189.70 318.89 L190.20 318.24 L190.70 317.42 L191.20 317.20 L191.70 316.49 L192.20 315.97 L192.70 314.96 L193.20 314.38 L193.70 313.62 L194.20 313.29 L194.70 312.42 L195.20 311.74 L195.70 311.29 L196.20 310.97 L196.70 310.41 L197.20 309.65 L197.70 309.12 L198.20 309.03 L198.70 308.51 L199.20 308.28 L199.70 307.73 L200.20 307.48 L200.70 307.61 L201.20 307.47 L201.70 307.38 L202.20 307.90 L202.70 307.94 L203.20 308.23 L203.70 308.16 L204.20 308.78 L204.70 308.84 L205.20 309.74 L205.70 310.20 L206.20 310.84 L206.70 311.62 L207.20 312.45 L207.70 312.85 L208.20 313.52 L208.70 314.45 L209.20 315.10 L209.70 315.82 L210.20 316.63 L210.70 317.35 L211.20 318.17 L211.70 318.97 L212.20 319.71 L212.70 320.66 L213.20 321.21 L213.70 322.05 L214.20 322.66 L214.70 323.48 L215.20 324.09 L215.70 324.96 L216.20 325.62 L216.70 326.72 L217.20 327.40 L217.70 328.00 L218.20 328.87 L218.70 329.78 L219.20 330.10 L219.70 331.08 L220.20 331.56 L220.70 332.24 L221.20 333.02 L221.70 333.43 L222.20 334.07 L222.70 334.72 L223.20 335.40 L223.70 335.64 L224.20 336.37 L224.70 336.82 L225.20 337.28 L225.70 337.66 L226.20 338.08 L226.70 338.38 L227.20 338.80 L227.70 339.12 L228.20 339.72 L228.70 339.78 L229.20 339.98 L229.70 340.17 L230.20 340.71 L230.70 340.93 L231.20 341.04 L231.70 341.08 L232.20 341.27 L232.70 341.51 L233.20 341.81 L233.70 341.89 L234.20 342.23 L234.70 342.36 L235.20 342.88 L235.70 343.09 L236.20 343.10 L236.70 343.17 L237.20 343.69 L237.70 343.61 L238.20 343.82 L238.70 343.85 L239.20 344.20 L239.70 344.40 L240.20 344.56 L240.70 344.47 L241.20 344.87 L241.70 344.61 L242.20 344.95 L242.70 344.91 L243.20 345.21 L243.70 344.91 L244.20 344.64 L244.70 344.43 L245.20 343.88 L245.70 343.74 L246.20 343.44 L246.70 343.43 L247.20 343.20 L247.70 343.11 L248.20 343.11 L248.70 342.60 L249.20 342.41 L249.70 342.79 L250.20 341.95 L250.70 342.20 L251.20 341.91 L251.70 341.19 L252.20 341.58 L252.70 341.38 L253.20 340.94 L253.70 340.81 L254.20 340.67 L254.70 339.92 L255.20 340.00 L255.70 339.78 L256.20 339.88 L256.70 339.76 L257.20 339.76 L257.70 339.58 L258.20 339.85 L258.70 339.72 L259.20 339.77 L259.70 339.44 L260.20 339.34 L260.70 339.47 L261.20 339.71 L261.70 339.58 L262.20 340.25 L262.70 340.12 L263.20 340.29 L263.70 340.40 L264.20 340.57 L264.70 340.54 L265.20 340.30 L265.70 341.09 L266.20 341.22 L266.70 341.21 L267.20 341.44 L267.70 341.75 L268.20 341.50 L268.70 342.30 L269.20 342.22 L269.70 342.39 L270.20 342.86 L270.70 343.53 L271.20 343.36 L271.70 344.01 L272.20 344.41 L272.70 344.22 L273.20 344.32 L273.70 344.61 L274.20 345.00 L274.70 345.32 L275.20 345.48 L275.70 345.81 L276.20 345.68 L276.70 346.08 L277.20 346.51 L277.70 347.26 L278.20 347.27 L278.70 347.84 L279.20 347.75 L279.70 348.16 L280.20 348.70 L280.70 349.40 L281.20 349.80 L281.70 350.17 L282.20 350.24 L282.70 350.80 L283.20 351.11 L283.70 351.47 L284.20 351.54 L284.70 352.50 L285.20 352.29 L285.70 353.25 L286.20 353.55 L286.70 353.16 L287.20 353.85 L287.70 354.49 L288.20 354.96 L288.70 354.89 L289.20 355.10 L289.70 355.39 L290.20 356.32 L290.70 356.07 L291.20 356.70 L291.70 356.67 L292.20 357.30 L292.70 357.97 L293.20 357.63 L293.70 358.49 L294.20 358.55 L294.70 359.14 L295.20 359.27 L295.70 359.17 L296.20 359.98 L296.70 359.91 L297.20 359.80 L297.70 360.04 L298.20 360.67 L298.70 360.87 L299.20 360.97 L299.70 361.04 L300.20 361.40 L300.70 361.57 L301.20 362.17 L301.70 361.68 L302.20 362.44 L302.70 362.68 L303.20 362.26 L303.70 363.05 L304.20 363.03 L304.70 363.32 L305.20 362.97 L305.70 363.16 L306.20 363.31 L306.70 363.91 L307.20 363.70 L307.70 363.63 L308.20 363.78 L308.70 363.76 L309.20 363.68 L309.70 363.82 L310.20 364.49 L310.70 364.14 L311.20 364.74 L311.70 364.26 L312.20 364.34 L312.70 364.60 L313.20 364.40 L313.70 364.60 L314.20 365.12 L314.70 365.12 L315.20 365.11 L315.70 365.01 L316.20 365.28 L316.70 365.35 L317.20 365.08 L317.70 365.25 L318.20 364.75 L318.70 365.34 L319.20 365.14 L319.70 365.41 L320.20 365.35 L320.70 365.09 L321.20 364.92 L321.70 365.65 L322.20 365.04 L322.70 365.34 L323.20 365.27 L323.70 365.27 L324.20 365.66 L324.70 365.90 L325.20 365.39 L325.70 365.77 L326.20 365.57 L326.70 365.87 L327.20 365.83 L327.70 365.75 L328.20 365.85 L328.70 365.99 L329.20 366.66 L329.70 366.44 L330.20 366.32 L330.70 366.97 L331.20 367.14 L331.70 366.81 L332.20 366.66 L332.70 366.82 L333.20 366.85 L333.70 367.17 L334.20 367.09 L334.70 367.35 L335.20 367.50 L335.70 367.91 L336.20 368.32 L336.70 368.38 L337.20 368.29 L337.70 368.47 L338.20 368.73 L338.70 368.80 L339.20 368.94 L339.70 368.90 L340.20 369.26 L340.70 370.00 L341.20 369.52 L341.70 370.01 L342.20 370.30 L342.70 370.68 L343.20 370.35 L343.70 370.58 L344.20 370.74 L344.70 371.05 L345.20 371.27 L345.70 371.86 L346.20 371.96 L346.70 372.18 L347.20 371.70 L347.70 371.92 L348.20 372.69 L348.70 373.07 L349.20 372.96 L349.70 373.29 L350.20 373.05 L350.70 373.59 L351.20 374.23 L351.70 374.35 L352.20 374.56 L352.70 374.83 L353.20 374.42 L353.70 374.47 L354.20 374.66 L354.70 375.11 L355.20 375.38 L355.70 375.74 L356.20 375.70 L356.70 375.78 L357.20 376.02 L357.70 375.91 L358.20 376.11 L358.70 375.83 L359.20 376.55 L359.70 376.23 L360.20 377.07 L360.70 376.86 L361.20 376.57 L361.70 376.48 L362.20 376.75 L362.70 377.34 L363.20 377.54 L363.70 376.96 L364.20 377.04 L364.70 377.71 L365.20 377.90 L365.70 377.79 L366.20 377.70 L366.70 378.26 L367.20 377.65 L367.70 378.09 L368.20 378.37 L368.70 379.06 L369.20 378.76 L369.70 379.13 L370.20 378.71 L370.70 378.50 L371.20 378.59 L371.70 379.51 L372.20 379.27 L372.70 378.86 L373.20 378.59 L373.70 379.22 L374.20 379.50 L374.70 379.26 L375.20 379.13 L375.70 379.68 L376.20 380.05 L376.70 379.27 L377.20 379.09 L377.70 379.51 L378.20 379.65 L378.70 380.01 L379.20 379.48 L379.70 380.23 L380.20 380.20 L380.70 379.95 L381.20 379.63 L381.70 380.58 L382.20 379.82 L382.70 380.46 L383.20 379.78 L383.70 379.80 L384.20 380.47 L384.70 379.94 L385.20 380.75 L385.70 380.23 L386.20 379.89 L386.70 379.95 L387.20 380.21 L387.70 380.53 L388.20 380.89 L388.70 379.95 L389.20 380.27 L389.70 380.07 L390.20 381.00 L390.70 380.02 L391.20 379.93 L391.70 379.96 L392.20 380.38 L392.70 381.00 L393.20 381.00 L393.70 380.84 L394.20 381.17 L394.70 381.11 L395.20 380.41 L395.70 380.25 L396.20 381.17 L396.70 380.96 L397.20 380.11 L397.70 380.89 L398.20 380.56 L398.70 380.57 L399.20 380.53 L399.70 380.35 L400.20 380.17 L400.70 380.51 L401.20 380.61 L401.70 381.35 L402.20 380.37 L402.70 381.39 L403.20 380.49 L403.70 380.69 L404.20 381.26 L404.70 381.27 L405.20 380.81 L405.70 380.37 L406.20 380.89 L406.70 380.78 L407.20 381.44 L407.70 380.58 L408.20 380.80 L408.70 381.45 L409.20 380.42 L409.70 380.89 L410.20 381.38 L410.70 381.33 L411.20 380.47 L411.70 380.48 L412.20 380.52 L412.70 381.56 L413.20 380.77 L413.70 381.37 L414.20 381.56 L414.70 380.90 L415.20 380.83 L415.70 381.66 L416.20 381.26 L416.70 380.85 L417.20 381.40 L417.70 380.93 L418.20 380.89 L418.70 380.57 L419.20 381.48 L419.70 381.69 L420.20 381.36 L420.70 381.74 L421.20 380.64 L421.70 380.90 L422.20 381.20 L422.70 381.79 L423.20 381.79 L423.70 381.12 L424.20 380.97 L424.70 381.19 L425.20 381.27 L425.70 381.80 L426.20 380.92 L426.70 381.67 L427.20 381.60 L427.70 381.71 L428.20 381.66 L428.70 381.47 L429.20 381.14 L429.70 381.13 L430.20 381.19 L430.70 381.70 L431.20 380.87 L431.70 381.02 L432.20 381.69 L432.70 381.09 L433.20 380.88 L433.70 380.85 L434.20 381.47 L434.70 381.21 L435.20 382.00 L435.70 381.89 L436.20 382.02 L436.70 381.16 L437.20 380.95 L437.70 380.97 L438.20 381.45 L438.70 381.71 L439.20 381.40 L439.70 381.15 L440.20 381.37 L440.70 381.62 L441.20 381.69 L441.70 381.78 L442.20 381.91 L442.70 381.69 L443.20 381.04 L443.70 381.91 L444.20 381.26 L444.70 381.59 L445.20 381.36 L445.70 381.80 L446.20 381.15 L446.70 381.21 L447.20 381.21 L447.70 381.11 L448.20 381.99 L448.70 381.62 L449.20 381.32 L449.70 381.41 L450.20 382.13 L450.70 381.55 L451.20 381.22 L451.70 381.91 L452.20 381.73 L452.70 382.14 L453.20 381.07 L453.70 381.52 L454.20 381.94 L454.70 381.97 L455.20 382.06 L455.70 381.01 L456.20 381.32 L456.70 381.11 L457.20 381.20 L457.70 382.14 L458.20 381.67 L458.70 382.09 L459.20 381.42 L459.70 382.02 L460.20 381.52 L460.70 381.30 L461.20 381.92 L461.70 382.12 L462.20 381.12 L462.70 381.71 L463.20 381.74 L463.70 381.26 L464.20 381.44 L464.70 381.17 L465.20 381.25 L465.70 381.31 L466.20 381.72 L466.70 381.79 L467.20 381.25 L467.70 381.02 L468.20 381.40 L468.70 381.83 L469.20 381.24 L469.70 381.39 L470.20 381.26 L470.70 381.97 L471.20 381.68 L471.70 381.10 L472.20 381.15 L472.70 381.50 L473.20 381.69 L473.70 381.80 L474.20 381.14 L474.70 381.23 L475.20 381.87 L475.70 381.53 L476.20 381.38 L476.70 381.41 L477.20 382.18 L477.70 381.42 L478.20 381.72 L478.70 381.47 L479.20 381.55 L479.70 382.08 L480.20 382.24 L480.70 381.49 L481.20 381.29 L481.70 381.93 L482.20 381.30 L482.70 381.06 L483.20 382.14 L483.70 381.57 L484.20 382.04 L484.70 381.55 L485.20 382.12 L485.70 381.62 L486.20 381.26 L486.70 381.08 L487.20 381.73 L487.70 381.84 L488.20 382.16 L488.70 381.18 L489.20 381.82 L489.70 381.52 L490.20 381.68 L490.70 381.25 L491.20 381.42 L491.70 381.70 L492.20 382.19 L492.70 381.21 L493.20 381.67 L493.70 382.05 L494.20 382.25 L494.70 381.32 L495.20 381.24 L495.70 382.22 L496.20 382.26 L496.70 381.67 L497.20 381.16 L497.70 382.21 L498.20 381.56 L498.70 382.18 L499.20 381.84 L499.70 382.09 L500.20 381.29 L500.70 382.04 L501.20 381.37 L501.70 381.59 L502.20 382.12 L502.70 382.10 L503.20 381.33 L503.70 381.37 L504.20 381.59 L504.70 381.73 L505.20 381.57 L505.70 381.26 L506.20 381.41 L506.70 381.99 L507.20 382.20 L507.70 381.17 L508.20 381.80 L508.70 382.03 L509.20 381.17 L509.70 382.13 L510.20 381.27 L510.70 381.85 L511.20 381.79 L511.70 381.88 L512.20 381.50 L512.70 381.64 L513.20 381.83 L513.70 381.65 L514.20 381.93 L514.70 381.67 L515.20 381.67 L515.70 381.17 L516.20 381.88 L516.70 381.73 L517.20 381.43 L517.70 382.06 L518.20 382.08 L518.70 381.70 L519.20 381.36 L519.70 381.72 L520.20 381.28 L520.70 381.31 L521.20 381.67 L521.70 381.27 L522.20 381.69 L522.70 381.77 L523.20 381.21 L523.70 381.92 L524.20 381.26 L524.70 382.04 L525.20 382.10 L525.70 381.78 L526.20 381.23 L526.70 381.77 L527.20 381.62 L527.70 382.31 L528.20 381.33 L528.70 382.20 L529.20 382.37 L529.70 382.05 L530.20 382.15 L530.70 381.41 L531.20 382.36 L531.70 381.77 L532.20 382.33 L532.70 382.28 L533.20 381.38 L533.70 382.13 L534.20 382.30 L534.70 381.26 L535.20 381.61 L535.70 382.10 L536.20 381.38 L536.70 382.27 L537.20 381.52 L537.70 382.17 L538.20 381.37 L538.70 381.80 L539.20 382.30 L539.70 381.45 L540.20 381.51 L540.70 381.81 L541.20 381.58 L541.70 381.25 L542.20 381.42 L542.70 381.40 L543.20 382.33 L543.70 382.02 L544.20 382.28 L544.70 381.41 L545.20 382.15 L545.70 381.35 L546.20 381.85 L546.70 381.98 L547.20 381.65 L547.70 382.26 L548.20 381.88 L548.70 381.91 L549.20 382.28 L549.70 381.34 L550.20 382.41 L550.70 381.98 L551.20 381.70 L551.70 382.18 L552.20 381.54 L552.70 382.41 L553.20 381.92 L553.70 381.66 L554.20 382.15 L554.70 381.76 L555.20 381.44 L555.70 382.12 L556.20 381.29 L556.70 382.22 L557.20 381.54 L557.70 382.00 L558.20 382.42 L558.70 381.94 L559.20 382.03 L559.70 381.61 L560.20 381.24 L560.70 381.28 L561.20 381.42 L561.70 381.98 L562.20 381.76 L562.70 381.86 L563.20 382.32 L563.70 381.41 L564.20 381.52 L564.70 382.03 L565.20 381.28 L565.70 381.25 L566.20 381.68 L566.70 381.38 L567.20 381.68 L567.70 381.52 L568.20 381.96 L568.70 381.96 L569.20 381.50 L569.70 382.01 L570.20 381.83 L570.70 381.42 L571.20 382.38 L571.70 381.55 L572.20 381.44 L572.70 381.38 L573.20 382.03 L573.70 382.31 L574.20 382.20 L574.70 381.75 L575.20 381.58 L575.70 381.28 L576.20 382.04 L576.70 381.94 L577.20 381.69 L577.70 382.05 L578.20 381.80 L578.70 382.40 L579.20 382.15 L579.70 381.57 L580.20 382.36 L580.70 381.33 L581.20 381.91 L581.70 381.76 L582.20 381.56 L582.70 381.35 L583.20 382.21 L583.70 381.29 L584.20 381.94 L584.70 382.41 L585.20 381.45 L585.70 381.52 L586.20 382.01 L586.70 381.89 L587.20 382.05 L587.70 382.26 L588.20 381.50 L588.70 381.66 L589.20 381.65 L589.70 381.35 L590.20 382.36 L590.70 382.23 L591.20 382.15 L591.70 381.30 L592.20 382.30 L592.70 382.19 L593.20 381.85 L593.70 382.18 L594.20 381.84 L594.70 381.57 L595.20 381.42 L595.70 381.57 L596.20 381.34 L596.70 381.70 L597.20 382.20 L597.70 382.13 L598.20 382.31 L598.70 382.15 L599.20 381.62 L599.70 381.96 L600.20 381.82 L600.70 382.25 L601.20 381.93 L601.70 381.62 L602.20 382.07 L602.70 382.46 L603.20 381.56 L603.70 382.36 L604.20 381.32 L604.70 381.62 L605.20 381.59 L605.70 382.20 L606.20 382.44 L606.70 382.20 L607.20 381.70 L607.70 382.36 L608.20 381.70 L608.70 381.60 L609.20 382.40 L609.70 382.07 L610.20 382.14 L610.70 382.11 L611.20 382.49 L611.70 381.88 L612.20 382.32 L612.70 382.15 L613.20 382.34 L613.70 381.84 L614.20 382.18 L614.70 382.00 L615.20 381.69 L615.70 381.57 L616.20 382.06 L616.70 381.41 L617.20 382.41 L617.70 381.49 L618.20 381.35 L618.70 381.45 L619.20 382.43 L619.70 381.73 L620.20 381.49 L620.70 381.36 L621.20 381.37 L621.70 382.15 L622.20 382.08 L622.70 382.16 L623.20 382.21 L623.70 381.40 L624.20 382.03 L624.70 381.76 L625.20 382.31 L625.70 382.31 L626.20 382.40 L626.70 381.41 L627.20 382.37 L627.70 382.43 L628.20 382.46 L628.70 381.46 L629.20 381.58 L629.70 381.46 L630.20 381.37 L630.70 382.35 L631.20 382.31 L631.70 382.09 L632.20 382.32 L632.70 382.09 L633.20 381.68 L633.70 381.45 L634.20 381.45 L634.70 382.24 L635.20 381.58 L635.70 381.72 L636.20 381.85 L636.70 381.36 L637.20 381.65 L637.70 381.68 L638.20 382.20 L638.70 381.78 L639.20 381.72 L639.70 382.50 L640.20 381.94 L640.70 382.36 L641.20 382.08 L641.70 381.38 L642.20 381.84 L642.70 381.87 L643.20 382.27 L643.70 381.76 L644.20 382.19 L644.70 381.99 L645.20 381.60 L645.70 382.38 L646.20 381.46 L646.70 382.33 L647.20 381.55 L647.70 381.35 L648.20 381.59 L648.70 382.26 L649.20 382.52 L649.70 381.35 L650.20 381.94 L650.70 381.94 L651.20 382.31 L651.70 381.57 L652.20 381.94 L652.70 381.77 L653.20 382.35 L653.70 381.67 L654.20 382.49 L654.70 381.69 L655.20 381.61 L655.70 382.19 L656.20 381.95 L656.70 381.49 L657.20 382.12 L657.70 381.45 L658.20 382.30 L658.70 382.19 L659.20 382.30 L659.70 382.11 L660.20 381.79 L660.70 381.84 L661.20 381.83 L661.70 382.43 L662.20 381.46 L662.70 382.43 L663.20 381.39 L663.70 381.61 L664.20 381.68 L664.70 382.44 L665.20 381.96 L665.70 381.82 L666.20 382.42 L666.70 381.64 L667.20 381.92 L667.70 382.00 L668.20 382.27 L668.70 382.27 L669.20 382.14 L669.70 381.78 L670.20 381.76 L670.70 381.55 L671.20 382.38 L671.70 382.16 L672.20 382.26 L672.70 381.57 L673.20 381.90 L673.70 382.30 L674.20 382.06 L674.70 381.52 L675.20 381.92 L675.70 382.43 L676.20 381.66 L676.70 381.60 L677.20 381.73 L677.70 382.22 L678.20 382.38 L678.70 381.56 L679.20 381.56 L679.70 381.67 L680.20 381.77 L680.70 382.00 L681.20 381.57 L681.70 381.77 L682.20 381.60 L682.70 382.55 L683.20 382.25 L683.70 381.50 L684.20 382.53 L684.70 381.50 L685.20 381.84 L685.70 382.56 L686.20 382.33 L686.70 382.26 L687.20 381.90 L687.70 381.61 L688.20 382.14 L688.70 381.51 L689.20 381.63 L689.70 381.85 L690.20 381.42 L690.70 381.86 L691.20 382.33 L691.70 382.21 L692.20 381.98 L692.70 382.14 L693.20 381.94 L693.70 381.55 L694.20 382.11 L694.70 381.87 L695.20 382.27 L695.70 382.47 L696.20 381.90 L696.70 382.07 L697.20 382.28 L697.70 381.89 L698.20 381.66 L698.70 382.25 L699.20 382.44 L699.70 382.31 L700.20 382.23 L700.70 382.41 L701.20 382.20 L701.70 382.16 L702.20 381.93 L702.70 381.76 L703.20 382.14 L703.70 381.51 L704.20 381.89 L704.70 382.33 L705.20 382.24 L705.70 382.14 L706.20 381.69 L706.70 381.90 L707.20 381.94 L707.70 382.14 L708.20 381.88 L708.70 382.20 L709.20 382.51 L709.70 381.61 L710.20 382.18 L710.70 382.33 L711.20 381.86 L711.70 381.98 L712.20 382.56 L712.70 381.44 L713.20 382.04 L713.70 381.59 L714.20 382.33 L714.70 382.52 L715.20 382.02 L715.70 381.51 L716.20 382.08 L716.70 382.04 L717.20 382.25 L717.70 382.01 L718.20 382.16 L718.70 382.39 L719.20 382.02 L719.70 381.89 L720.20 382.53 L720.70 381.65 L721.20 382.22 L721.70 381.87 L722.20 382.31 L722.70 381.54 L723.20 382.58 L723.70 381.82 L724.20 381.46 L724.70 381.73 L725.20 381.88 L725.70 381.41 L726.20 381.90 L726.70 381.90 L727.20 382.24 L727.70 381.82 L728.20 381.72 L728.70 381.67 L729.20 382.29 L729.70 382.53 L730.20 382.03 L730.70 381.66 L731.20 382.36 L731.70 381.87 L732.20 381.65 L732.70 381.55 L733.20 382.33 L733.70 382.37 L734.20 382.16 L734.70 381.96 L735.20 382.07 L735.70 381.67 L736.20 382.56 L736.70 381.82 L737.20 382.17 L737.70 382.38 L738.20 382.38 L738.70 381.96 L739.20 381.75 L739.70 382.06 L740.20 381.55 L740.70 382.40 L741.20 381.83 L741.70 382.42 L742.20 381.72 L742.70 381.85 L743.20 381.70 L743.70 381.91 L744.20 381.62 L744.70 381.40 L745.20 382.27 L745.70 381.74 L746.20 381.69 L746.70 381.76 L747.20 381.98 L748.00 381.91" fill="none" stroke="#3a3ad0" stroke-width="0.6" stroke-linejoin="round"/>
<line x1="45.25" y1="35.30" x2="45.25" y2="396.30" class="gD"/><line x1="70.81" y1="35.30" x2="70.81" y2="396.30" class="gm"/><line x1="96.37" y1="35.30" x2="96.37" y2="396.30" class="gm"/><line x1="121.94" y1="35.30" x2="121.94" y2="396.30" class="gm"/><line x1="147.50" y1="35.30" x2="147.50" y2="396.30" class="gm"/><line x1="173.06" y1="35.30" x2="173.06" y2="396.30" class="gMed"/><line x1="198.62" y1="35.30" x2="198.62" y2="396.30" class="gm"/><line x1="224.18" y1="35.30" x2="224.18" y2="396.30" class="gm"/><line x1="249.75" y1="35.30" x2="249.75" y2="396.30" class="gm"/><line x1="275.31" y1="35.30" x2="275.31" y2="396.30" class="gm"/><line x1="300.87" y1="35.30" x2="300.87" y2="396.30" class="gD"/><line x1="326.43" y1="35.30" x2="326.43" y2="396.30" class="gm"/><line x1="351.99" y1="35.30" x2="351.99" y2="396.30" class="gm"/><line x1="377.56" y1="35.30" x2="377.56" y2="396.30" class="gm"/><line x1="403.12" y1="35.30" x2="403.12" y2="396.30" class="gm"/><line x1="428.68" y1="35.30" x2="428.68" y2="396.30" class="gMed"/><line x1="454.24" y1="35.30" x2="454.24" y2="396.30" class="gm"/><line x1="479.80" y1="35.30" x2="479.80" y2="396.30" class="gm"/><line x1="505.37" y1="35.30" x2="505.37" y2="396.30" class="gm"/><line x1="530.93" y1="35.30" x2="530.93" y2="396.30" class="gm"/><line x1="556.49" y1="35.30" x2="556.49" y2="396.30" class="gD"/><line x1="582.05" y1="35.30" x2="582.05" y2="396.30" class="gm"/><line x1="607.61" y1="35.30" x2="607.61" y2="396.30" class="gm"/><line x1="633.18" y1="35.30" x2="633.18" y2="396.30" class="gm"/><line x1="658.74" y1="35.30" x2="658.74" y2="396.30" class="gm"/><line x1="684.30" y1="35.30" x2="684.30" y2="396.30" class="gMed"/><line x1="709.86" y1="35.30" x2="709.86" y2="396.30" class="gm"/><line x1="735.42" y1="35.30" x2="735.42" y2="396.30" class="gm"/><line x1="27.70" y1="387.90" x2="748.00" y2="387.90" class="gMed"/><line x1="27.70" y1="374.22" x2="748.00" y2="374.22" class="gmh"/><line x1="27.70" y1="360.54" x2="748.00" y2="360.54" class="gmh"/><line x1="27.70" y1="346.86" x2="748.00" y2="346.86" class="gmh"/><line x1="27.70" y1="333.18" x2="748.00" y2="333.18" class="gmh"/><line x1="27.70" y1="319.50" x2="748.00" y2="319.50" class="gMed"/><line x1="27.70" y1="305.82" x2="748.00" y2="305.82" class="gmh"/><line x1="27.70" y1="292.14" x2="748.00" y2="292.14" class="gmh"/><line x1="27.70" y1="278.46" x2="748.00" y2="278.46" class="gmh"/><line x1="27.70" y1="264.78" x2="748.00" y2="264.78" class="gmh"/><line x1="27.70" y1="251.10" x2="748.00" y2="251.10" class="gD"/><line x1="27.70" y1="237.42" x2="748.00" y2="237.42" class="gmh"/><line x1="27.70" y1="223.74" x2="748.00" y2="223.74" class="gmh"/><line x1="27.70" y1="210.06" x2="748.00" y2="210.06" class="gmh"/><line x1="27.70" y1="196.38" x2="748.00" y2="196.38" class="gmh"/><line x1="27.70" y1="182.70" x2="748.00" y2="182.70" class="gMed"/><line x1="27.70" y1="169.02" x2="748.00" y2="169.02" class="gmh"/><line x1="27.70" y1="155.34" x2="748.00" y2="155.34" class="gmh"/><line x1="27.70" y1="141.66" x2="748.00" y2="141.66" class="gmh"/><line x1="27.70" y1="127.98" x2="748.00" y2="127.98" class="gmh"/><line x1="27.70" y1="114.30" x2="748.00" y2="114.30" class="gD"/><line x1="27.70" y1="100.62" x2="748.00" y2="100.62" class="gmh"/><line x1="27.70" y1="86.94" x2="748.00" y2="86.94" class="gmh"/><line x1="27.70" y1="73.26" x2="748.00" y2="73.26" class="gmh"/><line x1="27.70" y1="59.58" x2="748.00" y2="59.58" class="gmh"/><line x1="27.70" y1="45.90" x2="748.00" y2="45.90" class="gmh"/>
<rect x="27.7" y="35.3" width="720.3" height="361.0" fill="none" stroke="#707070" stroke-width="1.2"/>
<text x="41.29" y="403.5" textLength="7.92" lengthAdjust="spacingAndGlyphs" class="tk">400</text><text x="169.10" y="403.5" textLength="7.92" lengthAdjust="spacingAndGlyphs" class="tk">500</text><text x="296.91" y="403.5" textLength="7.92" lengthAdjust="spacingAndGlyphs" class="tk">600</text><text x="424.72" y="403.5" textLength="7.92" lengthAdjust="spacingAndGlyphs" class="tk">700</text><text x="552.53" y="403.5" textLength="7.92" lengthAdjust="spacingAndGlyphs" class="tk">800</text><text x="680.34" y="403.5" textLength="7.92" lengthAdjust="spacingAndGlyphs" class="tk">900</text><text x="22.56" y="390.05" textLength="2.64" lengthAdjust="spacingAndGlyphs" class="tk">0</text><text x="12.00" y="321.65" textLength="13.20" lengthAdjust="spacingAndGlyphs" class="tk">10000</text><text x="12.00" y="253.25" textLength="13.20" lengthAdjust="spacingAndGlyphs" class="tk">20000</text><text x="12.00" y="184.85" textLength="13.20" lengthAdjust="spacingAndGlyphs" class="tk">30000</text><text x="12.00" y="116.45" textLength="13.20" lengthAdjust="spacingAndGlyphs" class="tk">40000</text><text x="12.00" y="48.05" textLength="13.20" lengthAdjust="spacingAndGlyphs" class="tk">50000</text>
<text x="360" y="414.4" textLength="54.6" lengthAdjust="spacingAndGlyphs" class="ax">Wavelength (nm)</text>
<text transform="translate(7.7 228) rotate(-90)" textLength="22" lengthAdjust="spacingAndGlyphs" class="ax">Counts</text>
</svg>
<svg class="abs" style="left:8px;top:10px" width="30" height="30" viewBox="8 10 30 30"><ellipse cx="23.35" cy="26.15" rx="11.55" ry="11.7" fill="rgba(255,255,255,0.22)" stroke="#a30f26" stroke-width="2"/></svg>
<div class="abs t " style="left:750.1px;top:34.42px;font-size:7.2px;line-height:8.64px;color:#111;transform:scaleX(0.7799);transform-origin:0 50%;font-weight:bold;font-style:italic;">Spectra</div>
<div class="abs t " style="left:752.1px;top:43.63px;font-size:5.45px;line-height:6.54px;color:#222;transform:scaleX(0.8616);transform-origin:0 50%;">Workspace</div>
<div class="abs" style="left:749.6px;top:51.3px;width:97.4px;height:0.6px;background:#d4d9e6;"></div>
<div class="abs" style="left:749.6px;top:51.1px;width:29px;height:0.9px;background:#3f8fe0;"></div>
<div class="abs" style="left:749.6px;top:52.0px;width:97.4px;height:14.0px;background:#eff2f9;"></div>
<svg class="abs" style="left:750px;top:52px" width="70" height="14" viewBox="750 52 70 14">
<path d="M756.5 55.9h3.2v0.8h-0.5v1.9l0.8 0.9v0.6h-3.8v-0.6l0.8-0.9v-1.9h-0.5z" fill="#c9cbd3"/><rect x="757.75" y="60.0" width="0.7" height="1.6" fill="#c9cbd3"/>
<path d="M768.1 57.0h3.9v4.4q0 0.5-0.5 0.5h-2.9q-0.5 0-0.5-0.5z" fill="#111"/><rect x="767.9" y="56.2" width="4.3" height="0.7" rx="0.3" fill="#111"/>
<circle cx="782" cy="59" r="2.7" fill="none" stroke="#111" stroke-width="0.8"/><path d="M780.1 57.1l3.8 3.8" stroke="#111" stroke-width="0.8"/>
<rect x="789.3" y="55.0" width="0.5" height="8" fill="#dcdfea"/>
<rect x="795.6" y="56.0" width="4.6" height="4.6" rx="0.5" fill="#111"/><path d="M794.3 57.6v4.3h4.4" fill="none" stroke="#111" stroke-width="0.9"/><path d="M796.6 58.2l1 1l1.7-1.9" fill="none" stroke="#eff2f9" stroke-width="0.6"/>
<rect x="807.6" y="56.1" width="4.4" height="4.4" rx="0.5" fill="none" stroke="#111" stroke-width="0.8"/><path d="M806.3 57.7v4.2h4.3" fill="none" stroke="#111" stroke-width="0.8"/>
</svg>
<div class="abs" style="left:751px;top:66.2px;width:96px;height:226.4px;background:#e7e9f4;border:0.6px solid #d3d7e2;border-right:none;box-sizing:border-box;"></div>
<div class="abs" style="left:753.4px;top:67.8px;width:5.6px;height:5.6px;background:#f4f6fb;border:0.6px solid #b8bccb;box-sizing:border-box;"></div>
<svg class="abs" style="left:753.4px;top:67.8px" width="5.6" height="5.6" viewBox="0 0 5.6 5.6"><path d="M1.1 2.7l1.2 1.5l2.2-3.0" fill="none" stroke="#1414c4" stroke-width="1.15"/></svg>
<div class="abs t " style="left:762px;top:66.83px;font-size:6.2px;line-height:7.44px;color:#2a2ae0;transform:scaleX(0.8290);transform-origin:0 50%;">Spectrum 873</div>
<div class="abs" style="left:749.6px;top:292.8px;width:97.4px;height:3.2px;background:#eceff7;"></div>
<div class="abs t " style="left:750.4px;top:298.12px;font-size:7.2px;line-height:8.64px;color:#111;transform:scaleX(0.7609);transform-origin:0 50%;font-weight:bold;font-style:italic;">Properties</div>
<div class="abs t " style="left:752.5px;top:307.93px;font-size:5.45px;line-height:6.54px;color:#222;transform:scaleX(0.8468);transform-origin:0 50%;">Spectrum</div>
<div class="abs t " style="left:777.5px;top:307.93px;font-size:5.45px;line-height:6.54px;color:#222;transform:scaleX(0.9034);transform-origin:0 50%;">Data</div>
<div class="abs" style="left:749.6px;top:315.2px;width:97.4px;height:0.6px;background:#d4d9e6;"></div>
<div class="abs" style="left:749.6px;top:315.0px;width:25.8px;height:0.9px;background:#3f8fe0;"></div>
<div class="abs" style="left:749.6px;top:315.9px;width:97.4px;height:9.0px;background:#f0f3fa;"></div>
<div class="abs t " style="left:752px;top:318.04px;font-size:5.45px;line-height:6.54px;color:#222;transform:scaleX(0.8835);transform-origin:0 50%;">Current Spectrum</div>
<div class="abs" style="left:751px;top:324.6px;width:96px;height:92.4px;background:#e7e9f4;border:0.6px solid #d3d7e2;border-right:none;border-bottom:none;box-sizing:border-box;"></div>
<div class="abs t " style="left:753px;top:327.84px;font-size:5.45px;line-height:6.54px;color:#222;transform:scaleX(0.8410);transform-origin:0 50%;">Name:</div>
<div class="abs" style="left:779.7px;top:326.4px;width:67.3px;height:8.7px;background:#eef1f8;border:0.6px solid #cfd3de;border-right:none;border-radius:1px 0 0 1px;box-sizing:border-box;"></div>
<div class="abs t " style="left:780.8px;top:327.84px;font-size:5.45px;line-height:6.54px;color:#222;transform:scaleX(0.8665);transform-origin:0 50%;">Spectrum 873</div>
<div class="abs t " style="left:753px;top:337.63px;font-size:5.45px;line-height:6.54px;color:#222;transform:scaleX(0.8456);transform-origin:0 50%;">Timestamp:</div>
<div class="abs t " style="left:779.8px;top:337.63px;font-size:5.45px;line-height:6.54px;color:#222;transform:scaleX(0.9116);transform-origin:0 50%;">2023-Jan-18 11:49:24</div>
<div class="abs t " style="left:753px;top:345.53px;font-size:5.45px;line-height:6.54px;color:#222;transform:scaleX(0.8667);transform-origin:0 50%;">Device:</div>
<div class="abs t " style="left:779.8px;top:345.53px;font-size:5.45px;line-height:6.54px;color:#222;transform:scaleX(0.8540);transform-origin:0 50%;">Ossila Spectrometer (COM3)</div>
<div class="abs t " style="left:753px;top:353.53px;font-size:5.45px;line-height:6.54px;color:#222;transform:scaleX(0.8481);transform-origin:0 50%;">Colour:</div>
<div class="abs" style="left:780px;top:353.5px;width:10.8px;height:5.6px;background:#6a6af2;border:0.6px solid #3b46d8;border-radius:1px;box-sizing:border-box;"></div>
<div class="abs t " style="left:753px;top:361.83px;font-size:5.45px;line-height:6.54px;color:#222;transform:scaleX(0.8470);transform-origin:0 50%;">Comments:</div>
<div class="abs" style="left:753px;top:369.2px;width:94px;height:22.6px;background:#eef1f8;border:0.6px solid #cfd3de;border-right:none;box-sizing:border-box;"></div>
<div class="abs t " style="left:755px;top:371.73px;font-size:5.45px;line-height:6.54px;color:#222;transform:scaleX(0.8082);transform-origin:0 50%;">PFO 500ms</div>
<div class="abs t " style="left:753.9px;top:396.04px;font-size:5.45px;line-height:6.54px;color:#222;transform:scaleX(0.8911);transform-origin:0 50%;">Integration Time: 500.0 ms</div>
<div class="abs t " style="left:753.9px;top:403.94px;font-size:5.45px;line-height:6.54px;color:#222;transform:scaleX(0.8613);transform-origin:0 50%;">Accumulation Number: 1</div>
<div class="abs t " style="left:753.9px;top:411.74px;font-size:5.45px;line-height:6.54px;color:#222;transform:scaleX(0.8755);transform-origin:0 50%;">Averaging Number: 1</div>
</body></html>
